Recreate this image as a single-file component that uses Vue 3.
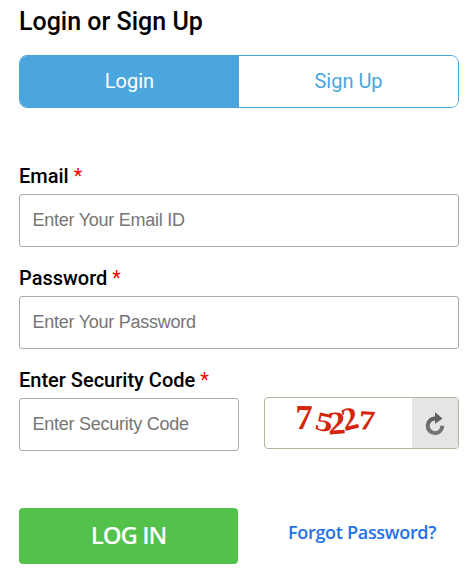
<template>
  <div class="login-page">
    <h1 class="title">Login or Sign Up</h1>

    <div class="tabs" role="tablist">
      <button
        v-for="tab in tabs"
        :key="tab.name"
        class="tab"
        :class="{ 'tab-active': activeTab === tab.name }"
        type="button"
        role="tab"
        @click="activeTab = tab.name"
      >
        {{ tab.label }}
      </button>
    </div>

    <form class="form" @submit.prevent>
      <div class="field">
        <label class="label" for="email">Email <span class="required">*</span></label>
        <input id="email" v-model="form.email" class="input" type="text" placeholder="Enter Your Email ID" />
      </div>

      <div class="field">
        <label class="label" for="password">Password <span class="required">*</span></label>
        <input id="password" v-model="form.password" class="input" type="password" placeholder="Enter Your Password" />
      </div>

      <div class="field">
        <label class="label" for="code">Enter Security Code <span class="required">*</span></label>
        <div class="code-row">
          <input id="code" v-model="form.code" class="input" type="text" placeholder="Enter Security Code" />
          <div class="captcha">
            <svg class="captcha-image" width="147" height="50" viewBox="0 0 147 50">
              <text
                v-for="(digit, index) in digits"
                :key="index"
                class="digit"
                :transform="digit.transform"
              >{{ digit.value }}</text>
            </svg>
            <button class="refresh" type="button" aria-label="Refresh code">
              <svg width="22" height="26" viewBox="0 0 22 26">
                <defs>
                  <linearGradient id="refreshFill" x1="0" y1="0" x2="0" y2="26" gradientUnits="userSpaceOnUse">
                    <stop offset="0" stop-color="#555" />
                    <stop offset="1" stop-color="#7c7c7c" />
                  </linearGradient>
                </defs>
                <path d="M12 8.6A7.3 7.3 0 1 0 18.3 15.8" fill="none" stroke="url(#refreshFill)" stroke-width="4" />
                <path d="M11 2.2L18.5 8.4L11 14Z" fill="url(#refreshFill)" />
              </svg>
            </button>
          </div>
        </div>
      </div>

      <div class="actions">
        <button class="submit" type="submit">LOG IN</button>
        <a class="forgot" href="#">Forgot Password?</a>
      </div>
    </form>
  </div>
</template>

<script setup>
import { reactive, ref } from "vue";

const tabs = [
  { name: "login", label: "Login" },
  { name: "signup", label: "Sign Up" },
];
const activeTab = ref("login");

const form = reactive({
  email: "",
  password: "",
  code: "",
});

// each captcha digit is shifted and tilted on its own
const digits = [
  { value: "7", transform: "translate(30 31) rotate(1) scale(1.12 1.13)" },
  { value: "5", transform: "translate(49 31) rotate(12) scale(1.12 0.86)" },
  { value: "2", transform: "translate(63.5 36.5) rotate(-4) scale(1.15 1.05)" },
  { value: "2", transform: "translate(79.5 33) rotate(-14) scale(1.05 1.04)" },
  { value: "7", transform: "translate(93.5 31) rotate(3) scale(1.06 0.88)" },
];
</script>

<style>
body {
  margin: 0;
  background: #fff;
}
</style>

<style scoped>
.login-page {
  box-sizing: border-box;
  width: 467px;
  height: 569px;
  padding: 8px 8px 0 19px;
  overflow: hidden;
  font-family: Roboto, "Liberation Sans", sans-serif;
  color: #000;
}

.title {
  margin: 0;
  font-size: 25px;
  line-height: 28px;
  font-weight: 500;
}

.tabs {
  display: flex;
  box-sizing: border-box;
  height: 53px;
  margin-top: 19px;
  overflow: hidden;
  border: 1px solid #4aa6dc;
  border-radius: 8px;
}

.tab {
  flex: 1;
  padding: 0 0 1px;
  border: 0;
  background: #fff;
  color: #4aa6dc;
  font-family: inherit;
  font-size: 20px;
}

.tab-active {
  background: #4aa6dc;
  color: #fff;
}

.form {
  padding-top: 54px;
}

.field {
  height: 102px;
}

.label {
  display: block;
  height: 32px;
  font-size: 20px;
  line-height: 28px;
  font-weight: 500;
}

.required {
  color: #f00;
  font-weight: 400;
}

.input {
  display: block;
  box-sizing: border-box;
  width: 100%;
  height: 53px;
  margin: 0;
  padding: 0 12.5px;
  border: 1px solid #aaa;
  border-radius: 3px;
  outline: none;
  background: #fff;
  font-family: "Liberation Sans", Arial, sans-serif;
  font-size: 18px;
  letter-spacing: -0.25px;
}

.input::placeholder {
  color: #757575;
  opacity: 1;
}

.code-row {
  display: grid;
  grid-template-columns: 220px 195px;
  justify-content: space-between;
}

.captcha {
  display: flex;
  box-sizing: border-box;
  height: 52px;
  margin-top: -1px;
  overflow: hidden;
  border: 1px solid #b3b3a0;
  border-radius: 4px;
}

.captcha-image {
  flex: none;
}

.digit {
  fill: #d4260d;
  font-family: "Liberation Serif", serif;
  font-size: 31px;
  font-weight: 700;
}

.refresh {
  flex: 1;
  display: flex;
  align-items: center;
  justify-content: center;
  padding: 0;
  border: 0;
  background: #e5e5e5;
}

.actions {
  display: flex;
  align-items: center;
  padding-top: 40px;
}

.submit {
  width: 219px;
  height: 56px;
  padding: 0 0 3px;
  border: 0;
  border-radius: 4px;
  background: #52c24b;
  color: #fff;
  font-family: "Open Sans", sans-serif;
  font-size: 24px;
  font-weight: 600;
  letter-spacing: -1px;
}

.forgot {
  margin: -8px 0 0 50px;
  color: #2371e8;
  font-family: "Open Sans", sans-serif;
  font-size: 18px;
  font-weight: 550;
  letter-spacing: -0.3px;
  text-decoration: none;
}
</style>
